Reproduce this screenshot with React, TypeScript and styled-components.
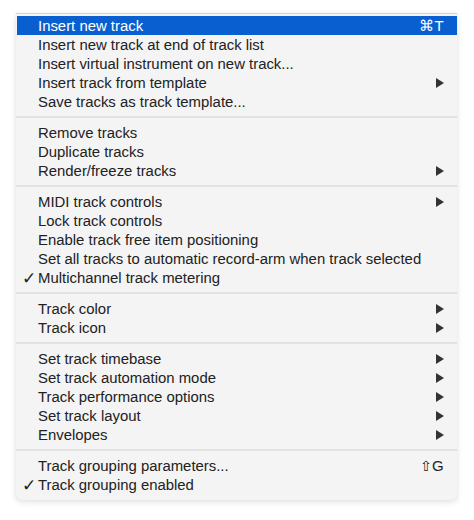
import React from "react";
import styled, { createGlobalStyle } from "styled-components";

const Global = createGlobalStyle`
  html, body { margin: 0; padding: 0; background: #ffffff; }
  body { font-family: "Liberation Sans", Arial, Helvetica, sans-serif; }
`;

const Page = styled.div`
  padding: 13px 17px 20px 16px;
`;

const Menu = styled.div`
  width: 441px;
  background: #f4f4f4;
  border-top: 1px solid #d4d4d4;
  border-radius: 0 0 5px 5px;
  padding: 2px 0 6px;
  box-shadow: 0 2px 6px rgba(0, 0, 0, 0.12), 0 0 1px rgba(0, 0, 0, 0.12);
  box-sizing: border-box;
`;

const Row = styled.div<{ $active?: boolean }>`
  display: grid;
  grid-template-columns: 21px 1fr auto;
  align-items: center;
  height: 19px;
  padding: 0 13px 0 0;
  margin-left: 1px;
  font-size: 14.9px;
  color: ${(p) => (p.$active ? "#ffffff" : "#222222")};
  background: ${(p) => (p.$active ? "#0a5fd0" : "transparent")};
`;

const Check = styled.span`
  font-size: 17px;
  font-family: "DejaVu Sans", sans-serif;
  text-align: left;
  padding-left: 5px;
  color: #222;
`;

const Label = styled.span`
  white-space: nowrap;
`;

const Shortcut = styled.span`
  font-size: 15px;
  letter-spacing: 0.3px;
`;

const ShiftGlyph = styled.span`
  font-family: "DejaVu Sans", sans-serif;
  font-size: 14px;
`;

const Arrow = styled.span`
  width: 0;
  height: 0;
  border-top: 5px solid transparent;
  border-bottom: 5px solid transparent;
  border-left: 8px solid #333;
`;

const Separator = styled.div`
  height: 12px;
  display: flex;
  align-items: center;
  &::after {
    content: "";
    display: block;
    width: 100%;
    height: 2px;
    background: #e2e2e2;
  }
`;

type Item = {
  label: string;
  check?: boolean;
  sub?: boolean;
  shortcut?: React.ReactNode;
  active?: boolean;
};

const groups: Item[][] = [
  [
    { label: "Insert new track", shortcut: "⌘T", active: true },
    { label: "Insert new track at end of track list" },
    { label: "Insert virtual instrument on new track..." },
    { label: "Insert track from template", sub: true },
    { label: "Save tracks as track template..." },
  ],
  [
    { label: "Remove tracks" },
    { label: "Duplicate tracks" },
    { label: "Render/freeze tracks", sub: true },
  ],
  [
    { label: "MIDI track controls", sub: true },
    { label: "Lock track controls" },
    { label: "Enable track free item positioning" },
    { label: "Set all tracks to automatic record-arm when track selected" },
    { label: "Multichannel track metering", check: true },
  ],
  [
    { label: "Track color", sub: true },
    { label: "Track icon", sub: true },
  ],
  [
    { label: "Set track timebase", sub: true },
    { label: "Set track automation mode", sub: true },
    { label: "Track performance options", sub: true },
    { label: "Set track layout", sub: true },
    { label: "Envelopes", sub: true },
  ],
  [
    {
      label: "Track grouping parameters...",
      shortcut: (
        <>
          <ShiftGlyph>⇧</ShiftGlyph>G
        </>
      ),
    },
    { label: "Track grouping enabled", check: true },
  ],
];

export default function App() {
  return (
    <>
      <Global />
      <Page>
        <Menu>
          {groups.map((g, gi) => (
            <React.Fragment key={gi}>
              {gi > 0 && <Separator />}
              {g.map((it) => (
                <Row key={it.label} $active={it.active}>
                  <Check>{it.check ? "✓" : ""}</Check>
                  <Label>{it.label}</Label>
                  {it.sub ? <Arrow /> : it.shortcut ? <Shortcut>{it.shortcut}</Shortcut> : <span />}
                </Row>
              ))}
            </React.Fragment>
          ))}
        </Menu>
      </Page>
    </>
  );
}
